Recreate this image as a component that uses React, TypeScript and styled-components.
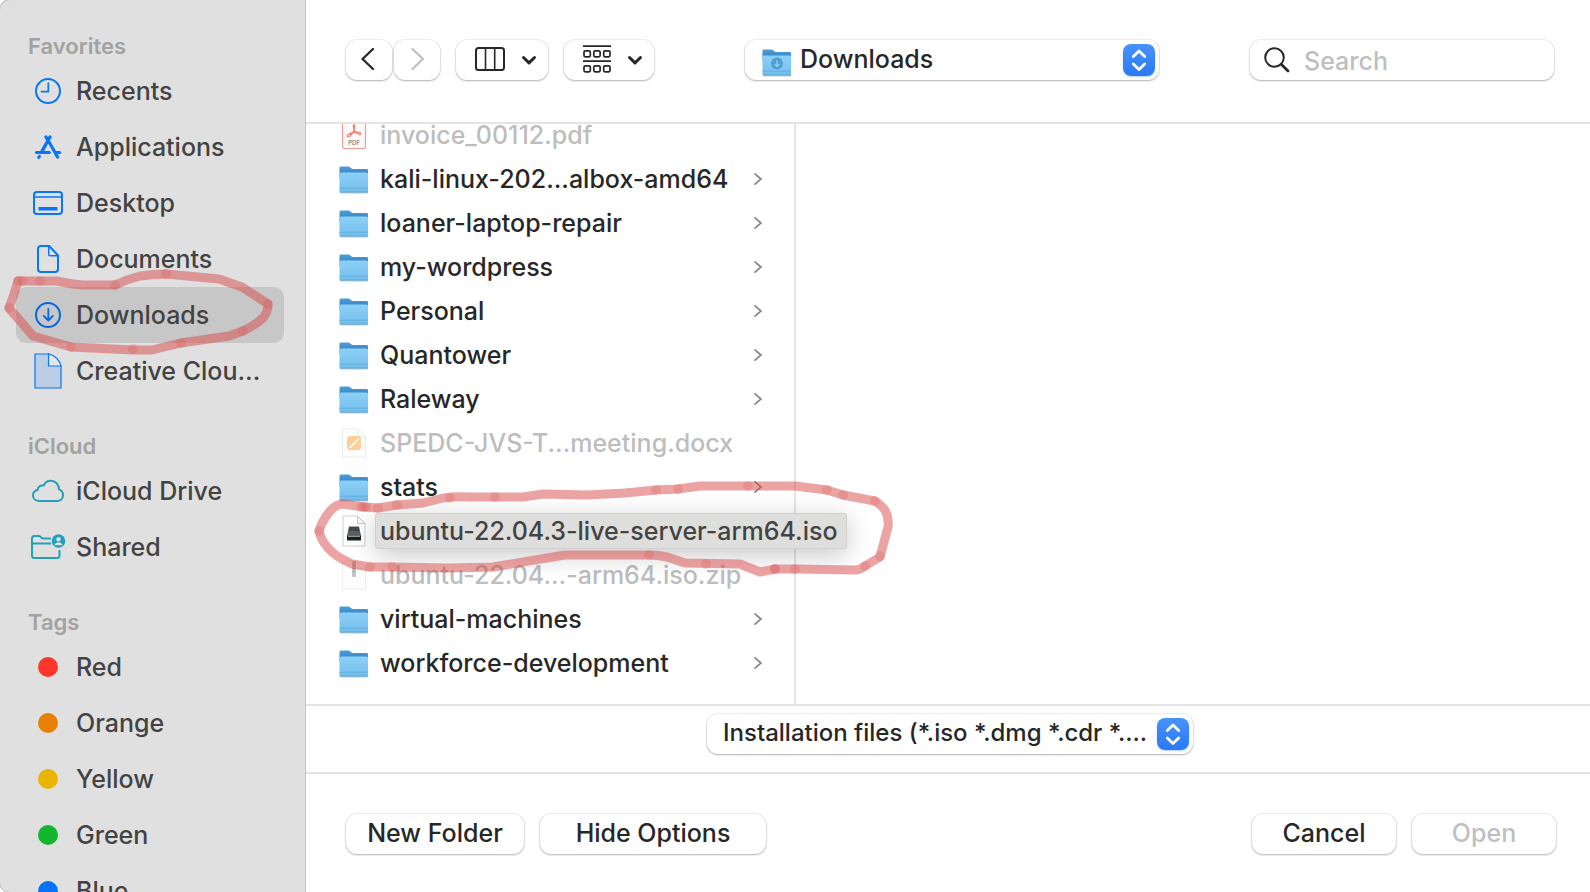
import React from "react";
import styled, { createGlobalStyle } from "styled-components";

const GlobalStyle = createGlobalStyle`
  *, *::before, *::after { box-sizing: border-box; }
  body {
    margin: 0;
    background: #ffffff;
    font-family: Inter, "Liberation Sans", sans-serif;
    font-size: 25px;
    line-height: 32px;
    font-weight: 500;
    color: #272727;
    overflow: hidden;
  }
  button, input, select { font: inherit; color: inherit; margin: 0; }
  ul { list-style: none; margin: 0; padding: 0; }
  svg { display: block; flex: none; }
`;

const Dialog = styled.div`
  position: relative;
  display: flex;
  height: 100vh;
  overflow: hidden;
`;

const Sidebar = styled.nav`
  flex: none;
  width: 305px;
  margin-right: 1px;
  padding: 29px 21px 0 16px;
  overflow: hidden;
  background: #e0e0e0;
  border-radius: 10px 0 0 10px;
  box-shadow: 0 0 0 1px #c2c2c2;
`;

const Section = styled.section`
  margin-bottom: 30px;
`;

const SectionTitle = styled.h2`
  margin: 0;
  padding-left: 12px;
  font-size: 22px;
  line-height: 34px;
  font-weight: 600;
  color: #a2a2a2;
`;

const Place = styled.a<{ $active?: boolean }>`
  display: flex;
  align-items: center;
  gap: 11px;
  height: 56px;
  padding-left: 15px;
  border-radius: 10px;
  color: #434343;
  text-decoration: none;
  background: ${(p) => (p.$active ? "#c7c7c7" : "transparent")};
`;

const PlaceIcon = styled.span`
  display: flex;
  justify-content: center;
  flex: none;
  width: 34px;
`;

const TagDot = styled.span<{ $color: string }>`
  width: 20px;
  height: 20px;
  border-radius: 50%;
  background: ${(p) => p.$color};
`;

const Main = styled.main`
  flex: 1;
  min-width: 0;
  display: flex;
  flex-direction: column;
`;

const Toolbar = styled.header`
  flex: none;
  display: flex;
  justify-content: space-between;
  align-items: flex-start;
  height: 124px;
  padding: 40px 36px 0 40px;
  border-bottom: 2px solid #e4e4e4;
`;

const Group = styled.div<{ $gap: number }>`
  display: flex;
  gap: ${(p) => p.$gap}px;
`;

const raised = `
  background: #ffffff;
  border: 0;
  border-radius: 11px;
  box-shadow: 0 0 1px 1px rgba(0, 0, 0, 0.07), 0 1px 2px rgba(0, 0, 0, 0.25);
`;

const Button = styled.button<{ $width: number }>`
  ${raised}
  display: flex;
  align-items: center;
  justify-content: center;
  width: ${(p) => p.$width}px;
  height: 40px;
  padding: 0 0 2px;
  &:disabled { color: #bfbfbf; }
`;

const MenuButton = styled(Button)`
  gap: 16px;
  padding-left: 8px;
`;

const SelectBox = styled.div<{ $width: number }>`
  ${raised}
  position: relative;
  width: ${(p) => p.$width}px;
  height: 40px;
`;

const Select = styled.select<{ $indent: number; $size?: number }>`
  appearance: none;
  width: 100%;
  height: 100%;
  padding: 0 40px 2px ${(p) => p.$indent}px;
  border: 0;
  border-radius: 11px;
  background: transparent;
  font-size: ${(p) => p.$size ?? 25}px;
`;

const SelectIcon = styled.span`
  position: absolute;
  left: 17px;
  top: 7px;
  pointer-events: none;
`;

const Stepper = styled.span`
  position: absolute;
  right: 4px;
  top: 4px;
  display: grid;
  place-items: center;
  width: 32px;
  height: 32px;
  border-radius: 8px;
  background: linear-gradient(#4793fb, #2b78f6);
  box-shadow: 0 1px 2px rgba(43, 120, 246, 0.35);
  pointer-events: none;
`;

const SearchBox = styled.label`
  ${raised}
  display: flex;
  align-items: center;
  gap: 14px;
  width: 304px;
  height: 40px;
  padding-left: 14px;
`;

const SearchInput = styled.input`
  flex: 1;
  min-width: 0;
  height: 40px;
  padding: 1px 0 0;
  border: 0;
  outline: 0;
  background: transparent;
  &::placeholder { color: #bfbfbf; opacity: 1; }
`;

const Browser = styled.section`
  flex: 1;
  min-height: 0;
  display: flex;
  overflow: hidden;
`;

const Column = styled.ul`
  flex: none;
  width: 490px;
  border-right: 2px solid #e4e4e4;

  & > li:first-child { margin-top: -11px; }
`;

const FileRow = styled.li<{ $dim?: boolean }>`
  display: flex;
  align-items: center;
  gap: 6px;
  height: 44px;
  padding: 0 31px 0 32px;
  color: ${(p) => (p.$dim ? "#bdbdbd" : "#272727")};
`;

const FileIcon = styled.span`
  display: flex;
  justify-content: center;
  flex: none;
  width: 32px;
`;

const FileName = styled.span`
  flex: 1;
  white-space: nowrap;
  padding-left: 4px;
`;

const SelectedName = styled.span`
  position: relative;
  z-index: 1;
  flex: none;
  padding: 1px 8px 1px 4px;
  border: 1px solid #d0d0d0;
  border-radius: 3px;
  margin-left: -1px;
  background: #dededd;
  color: #434343;
  white-space: nowrap;
  box-shadow: 0 6px 26px rgba(0, 0, 0, 0.22);
`;

const FilterBar = styled.div`
  flex: none;
  display: flex;
  justify-content: center;
  height: 70px;
  padding: 8px 0 0 4px;
  border: solid #e4e4e4;
  border-width: 2px 0;
`;

const Footer = styled.footer`
  flex: none;
  display: flex;
  justify-content: space-between;
  height: 118px;
  padding: 40px 34px 0 40px;
`;

const Marker = styled.svg`
  position: absolute;
  left: 0;
  top: 0;
  z-index: 2;
  pointer-events: none;
`;

const BLUE = "#0a75f5";
const TEAL = "#259fb8";

const ClockIcon = () => (
  <svg width="28" height="28" viewBox="0 0 28 28" fill="none" stroke={BLUE} strokeWidth="2" strokeLinecap="round" strokeLinejoin="round">
    <circle cx="14" cy="14" r="12" />
    <path d="M14.3 6v8.700H7.500" strokeWidth="1.700" />
  </svg>
);

const AppsIcon = () => (
  <svg width="28" height="26" viewBox="0 0 28 26" fill="none" stroke={BLUE} strokeWidth="3.400" strokeLinecap="round">
    <path d="M12 3l11.600 20" />
    <path d="M16 3L7.800 17.600" />
    <path d="M2.400 18.600h13" strokeWidth="3" />
    <path d="M21.600 18.600h4" strokeWidth="3" />
    <path d="M5.400 22.400l-.7 1.100" strokeWidth="3.200" />
    <path d="M14.200 11l5.300 9.500" stroke="#e0e0e0" strokeWidth="1.200" />
  </svg>
);

const DesktopIcon = () => (
  <svg width="30" height="24" viewBox="0 0 30 24" fill="none" stroke={BLUE} strokeWidth="2">
    <rect x="1" y="1" width="28" height="22" rx="3" />
    <path d="M1 6h28" strokeWidth="1.500" />
    <rect x="5.500" y="16" width="19" height="3.600" rx=".6" fill={BLUE} stroke="none" />
  </svg>
);

const DocumentIcon = () => (
  <svg width="22" height="28" viewBox="0 0 22 28" fill="none" stroke={BLUE} strokeWidth="2" strokeLinejoin="round">
    <path d="M4 1h8.200L21 10.500V24a3 3 0 0 1-3 3H4a3 3 0 0 1-3-3V4a3 3 0 0 1 3-3z" />
    <path d="M11.700 1v8.200a1.600 1.600 0 0 0 1.600 1.600H21" strokeWidth="1.500" />
  </svg>
);

const DownloadIcon = () => (
  <svg width="28" height="28" viewBox="0 0 28 28" fill="none" stroke="#0667e6" strokeWidth="2" strokeLinecap="round" strokeLinejoin="round">
    <circle cx="14" cy="14" r="12" />
    <path d="M14.300 8v11M9.800 15l4.500 4.500 4.500-4.500" strokeWidth="1.800" />
  </svg>
);

const CloudFileIcon = () => (
  <svg width="28" height="36" viewBox="0 0 28 36" fill="#bccde6" stroke={BLUE} strokeWidth="1.200">
    <path d="M1 1h14l12 12v22H1z" />
    <path d="M14.500 1v12H27c-1-5-6-11-12-12z" fill="#e3e6ea" />
  </svg>
);

const CloudIcon = () => (
  <svg width="34" height="24" viewBox="0 0 34 24" fill="none" stroke={TEAL} strokeWidth="2" strokeLinejoin="round">
    <path d="M8.500 22C4.500 22 2 19.500 2 16.400c0-2.900 2-5 4.700-5.500.2-3.200 2.700-5.100 6-4.300C14 3.500 16.500 1.800 19.600 1.800c5 0 8.400 3.600 8.400 8.600 2.400.8 4 2.900 4 5.600 0 3.500-2.500 6-6 6z" />
  </svg>
);

const SharedIcon = () => (
  <svg width="36" height="26" viewBox="0 0 36 26" fill="none" stroke={TEAL} strokeWidth="2" strokeLinecap="butt">
    <path d="M29.500 16v5.500a2.500 2.500 0 0 1-2.500 2.500H4.500A2.500 2.500 0 0 1 2 21.500v-17A2.500 2.500 0 0 1 4.500 2h4.300c1.800 0 2.500 2.500 4.500 2.500H21M2 9.500h19" />
    <circle cx="28.500" cy="7" r="6.800" fill={TEAL} stroke="none" />
    <circle cx="28.500" cy="5.300" r="2.200" fill="#e0e0e0" stroke="none" />
    <path d="M24.500 11.200c.6-2 2.200-2.900 4-2.900s3.400.9 4 2.900z" fill="#e0e0e0" stroke="none" />
  </svg>
);

const FolderIcon = ({ badge }: { badge?: boolean }) => (
  <svg width="30" height="30" viewBox="0 -2 30 30">
    <defs>
      <linearGradient id="folderFront" x1="0" y1="0" x2="0" y2="1">
        <stop offset="0" stopColor="#8dd0f8" />
        <stop offset="1" stopColor="#72bdec" />
      </linearGradient>
      <linearGradient id="folderBack" x1="0" y1="0" x2="0" y2="1">
        <stop offset="0" stopColor="#4f9fd4" />
        <stop offset="1" stopColor="#2a78c4" />
      </linearGradient>
    </defs>
    <rect x="1" y="24" width="28" height="3.500" rx="1.500" fill="#000" opacity=".22" />
    <path d="M.5 1.800A1.300 1.300 0 0 1 1.800.5h8c1.300 0 2.200 2.500 4 2.500h13.900A1.300 1.300 0 0 1 29 4.300V12H.5z" fill="url(#folderBack)" />
    <path d="M.5 8a1.600 1.600 0 0 1 1.600-1.600h25.300A1.600 1.600 0 0 1 29 8v17.500a1 1 0 0 1-1 1H1.500a1 1 0 0 1-1-1z" fill="url(#folderFront)" />
    <path d="M.5 22.300H29" stroke="#62add9" strokeWidth=".8" />
    <path d="M.5 26H29" stroke="#5ba6d3" strokeWidth=".8" />
    {badge && (
      <>
        <circle cx="15" cy="14.500" r="5.900" fill="#4f9ed2" />
        <path d="M15 11.300v6M12.600 15l2.400 2.500 2.400-2.500" fill="none" stroke="#8ccdf5" strokeWidth="1.400" />
      </>
    )}
  </svg>
);

const PdfIcon = () => (
  <svg width="26" height="30" viewBox="0 0 26 30" fill="none">
    <rect x="1.500" y="-4" width="23" height="32.500" rx="2.500" fill="#fbfafa" stroke="#f29a92" strokeWidth="1.200" />
    <path
      d="M6.500 16.300c-1.200-1.300 1.800-3 6.500-3.800 3.500-.6 7.200-.2 6.800 1.400-.5 1.700-4.500-.2-6.300-3.400-1.300-2.300-1.700-5.500-.5-5.700 1.500-.2.700 3.700-1 7.200-1.600 3.200-4.200 5.500-5.500 4.300z"
      stroke="#f08078"
      strokeWidth="1.300"
    />
    <text x="13" y="25" textAnchor="middle" fontSize="6" fontWeight="600" fill="#8a8a8a">PDF</text>
  </svg>
);

const Sheet = ({ line }: { line: string }) => (
  <>
    <path d="M1.500 1h15.500L24.500 8.500V29h-23z" fill="#fdfdfd" stroke={line} />
    <path d="M17 1v7.500h7.500z" fill="#fff" stroke={line} />
  </>
);

const PagesIcon = () => (
  <svg width="26" height="30" viewBox="0 0 26 30">
    <Sheet line="#ececec" />
    <rect x="6" y="8" width="14" height="14" rx="3" fill="#fbcf98" />
    <path d="M9 19.500l8.500-8.500" stroke="#fff" strokeWidth="1.600" strokeLinecap="round" />
  </svg>
);

const DiskImageIcon = () => (
  <svg width="26" height="32" viewBox="0 0 26 32">
    <path d="M2 1h14.500l7.500 7.500V31H2z" fill="#fff" stroke="#cfcfcf" />
    <path d="M16.500 1v7.500H24z" fill="#fafafa" stroke="#c8c8c8" />
    <path d="M8 11.500h10l2 9.500H6z" fill="#596063" />
    <path d="M8.300 12h9.400l.8 4h-11z" fill="#42494c" />
    <rect x="6" y="20.500" width="14" height="5" fill="#1d2022" />
    <path d="M7 21.200h12" stroke="#aeb6b8" strokeWidth="1.200" />
  </svg>
);

const ZipIcon = () => (
  <svg width="26" height="30" viewBox="0 0 26 30">
    <Sheet line="#ededed" />
    <rect x="11" y="1" width="4" height="16" rx="1" fill="#c4c4c4" />
    <path d="M13 2v10" stroke="#8e8e8e" strokeWidth="1.500" strokeDasharray="1.500 1.500" />
  </svg>
);

const Disclosure = () => (
  <svg width="10" height="14" viewBox="0 0 10 14" fill="none" stroke="#858585" strokeWidth="1.700" strokeLinecap="round">
    <path d="M2 1.800l6 5.200-6 5.200" />
  </svg>
);

const StepperArrows = () => (
  <svg width="18" height="26" viewBox="0 0 18 26" fill="none" stroke="#fff" strokeWidth="2.800" strokeLinecap="round" strokeLinejoin="round">
    <path d="M3.300 9.500L9 4l5.700 5.500M3.300 17L9 22.500l5.700-5.500" />
  </svg>
);

const ChevronDown = () => (
  <svg width="16" height="12" viewBox="0 0 16 12" fill="none" stroke="#272727" strokeWidth="3" strokeLinecap="round" strokeLinejoin="round">
    <path d="M2.500 4.500L8 9.800l5.500-5.300" />
  </svg>
);

const Arrow = ({ d, color }: { d: string; color: string }) => (
  <svg width="16" height="26" viewBox="0 0 16 26" fill="none" stroke={color} strokeWidth="2.300" strokeLinecap="round" strokeLinejoin="round">
    <path d={d} />
  </svg>
);

const ColumnsIcon = () => (
  <svg width="30" height="24" viewBox="0 0 30 24" fill="none" stroke="#272727" strokeWidth="2">
    <rect x="1" y="1" width="28" height="22" rx="2.500" />
    <path d="M10.500 1v22M19.700 1v22" strokeWidth="1.600" />
  </svg>
);

const GroupIcon = () => (
  <svg width="28" height="28" viewBox="0 0 28 28" fill="none" stroke="#272727" strokeWidth="1.700">
    <path d="M0 1.200h28M0 16.200h28" />
    {[5.9, 20.8].map((y) =>
      [1, 10.8, 20.7].map((x) => <rect key={`${x}-${y}`} x={x} y={y} width="6.300" height="6" rx="1.300" />)
    )}
  </svg>
);

const SearchIcon = () => (
  <svg width="26" height="26" viewBox="0 0 26 26" fill="none" stroke="#272727" strokeLinecap="round">
    <circle cx="10.500" cy="10.500" r="9.300" strokeWidth="2" />
    <path d="M17.500 17.500l6.500 6.500" strokeWidth="2.800" />
  </svg>
);

const favorites = [
  { name: "Recents", icon: <ClockIcon /> },
  { name: "Applications", icon: <AppsIcon /> },
  { name: "Desktop", icon: <DesktopIcon /> },
  { name: "Documents", icon: <DocumentIcon /> },
  { name: "Downloads", icon: <DownloadIcon />, active: true },
  { name: "Creative Clou...", icon: <CloudFileIcon /> },
];

const cloud = [
  { name: "iCloud Drive", icon: <CloudIcon /> },
  { name: "Shared", icon: <SharedIcon /> },
];

const tags = [
  { name: "Red", icon: <TagDot $color="#fb372c" /> },
  { name: "Orange", icon: <TagDot $color="#e88103" /> },
  { name: "Yellow", icon: <TagDot $color="#e9b502" /> },
  { name: "Green", icon: <TagDot $color="#12b52c" /> },
  { name: "Blue", icon: <TagDot $color="#0674fa" /> },
];

type PlaceItem = { name: string; icon: React.ReactNode; active?: boolean };

const PlaceList = ({ title, items }: { title: string; items: PlaceItem[] }) => (
  <Section>
    <SectionTitle>{title}</SectionTitle>
    <ul>
      {items.map((item) => (
        <li key={item.name}>
          <Place href="#" $active={item.active} aria-current={item.active ? "page" : undefined}>
            <PlaceIcon>{item.icon}</PlaceIcon>
            {item.name}
          </Place>
        </li>
      ))}
    </ul>
  </Section>
);

type FileItem = { name: string; kind?: "pdf" | "docx" | "iso" | "zip" };

const files: FileItem[] = [
  { name: "invoice_00112.pdf", kind: "pdf" },
  { name: "kali-linux-202...albox-amd64" },
  { name: "loaner-laptop-repair" },
  { name: "my-wordpress" },
  { name: "Personal" },
  { name: "Quantower" },
  { name: "Raleway" },
  { name: "SPEDC-JVS-T...meeting.docx", kind: "docx" },
  { name: "stats" },
  { name: "ubuntu-22.04.3-live-server-arm64.iso", kind: "iso" },
  { name: "ubuntu-22.04...-arm64.iso.zip", kind: "zip" },
  { name: "virtual-machines" },
  { name: "workforce-development" },
];

const fileIcons = {
  pdf: <PdfIcon />,
  docx: <PagesIcon />,
  iso: <DiskImageIcon />,
  zip: <ZipIcon />,
};

const File = ({ name, kind }: FileItem) => (
  <FileRow $dim={kind !== undefined && kind !== "iso"}>
    <FileIcon>{kind ? fileIcons[kind] : <FolderIcon />}</FileIcon>
    {kind === "iso" ? <SelectedName>{name}</SelectedName> : <FileName>{name}</FileName>}
    {!kind && <Disclosure />}
  </FileRow>
);

const sidebarLoop =
  "M18 281L40 281 57 281Q70 284 82 285L115 285Q128 279 140 276 154 274 166 274L219 279 242 287 268 304Q268 312 263 318 255 325 243 331L229 336 181 343 152 350 133 350 71 347 33 336 9 308 13 297 18 281";
const fileLoop =
  "M364 507L378 508 397 505 423 503 443 498Q456 496 470 497L523 497 543 494 587 495 625 493 656 490 678 489 700 486 795 486 827 490 843 495 875 501Q883 506 886 512 889 519 888 527L880 557 865 566Q860 570 855 570L797 569 775 569 760 572 740 564 685 563 667 557Q658 555 649 555L565 555 493 567 447 568 392 567 370 567 352 564Q336 557 328 548 321 540 319 531 323 518 333 508 338 504 343 504L364 507";

const dots = [
  [18, 281], [22, 281], [9, 308], [268, 304], [166, 274], [181, 343], [71, 347], [243, 331], [115, 285], [133, 349], [40, 281],
  [361, 507], [366, 507], [364, 507], [378, 508], [397, 505], [450, 498], [495, 497], [319, 531], [370, 567], [392, 567],
  [656, 490], [678, 489], [748, 486], [827, 490], [843, 495], [875, 501], [880, 556], [865, 566], [775, 569], [775, 569],
  [795, 569], [706, 564], [649, 555],
];

const Annotations = () => (
  <Marker width="900" height="600" viewBox="0 0 900 600" aria-hidden="true">
    <g fill="none" stroke="#d84848" strokeOpacity=".5" strokeWidth="9" strokeLinejoin="round" strokeLinecap="round">
      <path d={sidebarLoop} />
      <path d={fileLoop} />
    </g>
    <g fill="#d84848" fillOpacity=".2">
      {dots.map(([x, y], i) => (
        <circle key={i} cx={x} cy={y} r="5" />
      ))}
    </g>
  </Marker>
);

export default function App() {
  return (
    <>
      <GlobalStyle />
      <Dialog>
        <Sidebar aria-label="Places">
          <PlaceList title="Favorites" items={favorites} />
          <PlaceList title="iCloud" items={cloud} />
          <PlaceList title="Tags" items={tags} />
        </Sidebar>
        <Main>
          <Toolbar>
            <Group $gap={16}>
              <Group $gap={2}>
                <Button type="button" $width={46} aria-label="Back">
                  <Arrow d="M12 3L1.500 13 12 23" color="#272727" />
                </Button>
                <Button type="button" $width={46} aria-label="Forward" disabled>
                  <Arrow d="M3.500 3L14 13 3.500 23" color="#bfbfbf" />
                </Button>
              </Group>
              <MenuButton type="button" $width={92} aria-label="View as columns">
                <ColumnsIcon />
                <ChevronDown />
              </MenuButton>
              <MenuButton type="button" $width={90} aria-label="Group items">
                <GroupIcon />
                <ChevronDown />
              </MenuButton>
            </Group>
            <SelectBox $width={414}>
              <SelectIcon>
                <FolderIcon badge />
              </SelectIcon>
              <Select $indent={55} aria-label="Location">
                <option>Downloads</option>
              </Select>
              <Stepper>
                <StepperArrows />
              </Stepper>
            </SelectBox>
            <SearchBox>
              <SearchIcon />
              <SearchInput type="text" placeholder="Search" aria-label="Search" />
            </SearchBox>
          </Toolbar>
          <Browser>
            <Column>
              {files.map((file) => (
                <File key={file.name} {...file} />
              ))}
            </Column>
          </Browser>
          <FilterBar>
            <SelectBox $width={486}>
              <Select $indent={16} $size={24} aria-label="File type">
                <option>Installation files (*.iso *.dmg *.cdr *....</option>
              </Select>
              <Stepper>
                <StepperArrows />
              </Stepper>
            </SelectBox>
          </FilterBar>
          <Footer>
            <Group $gap={16}>
              <Button type="button" $width={178}>New Folder</Button>
              <Button type="button" $width={226}>Hide Options</Button>
            </Group>
            <Group $gap={16}>
              <Button type="button" $width={144}>Cancel</Button>
              <Button type="button" $width={144} disabled>Open</Button>
            </Group>
          </Footer>
        </Main>
        <Annotations />
      </Dialog>
    </>
  );
}
